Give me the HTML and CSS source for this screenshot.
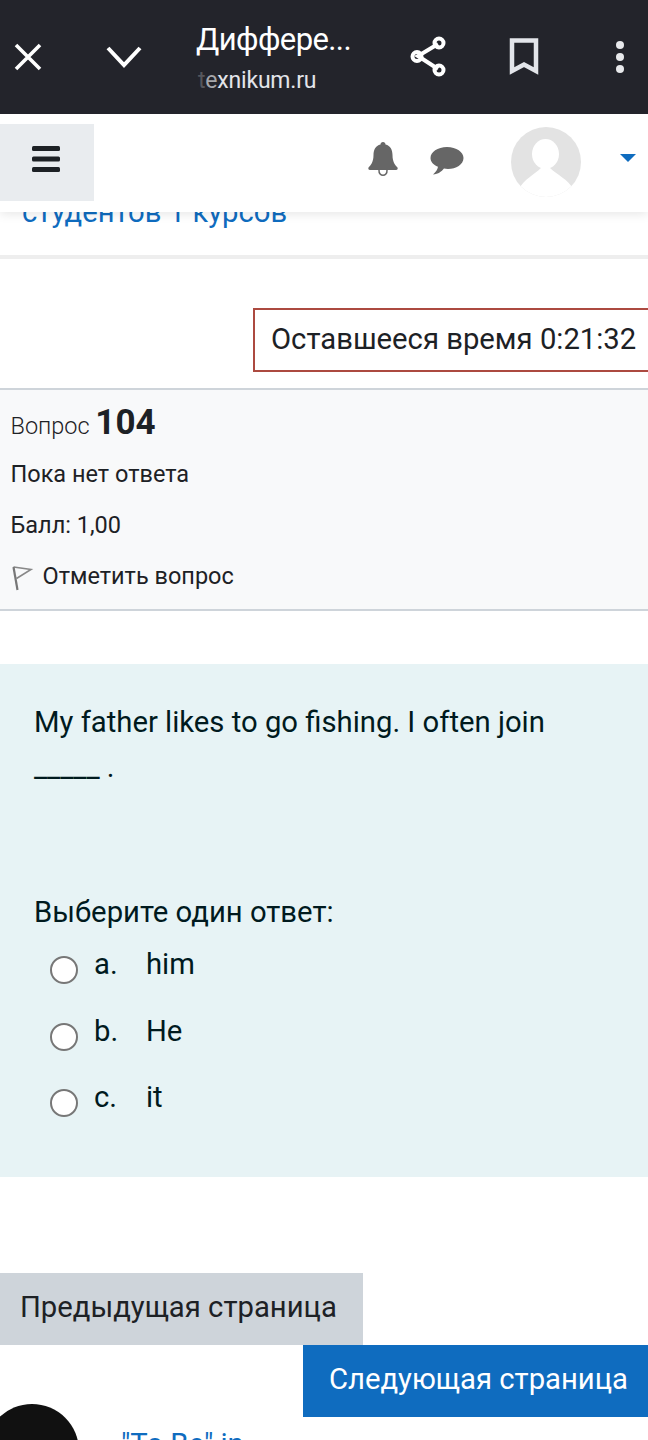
FILE: index.html
```html
<!DOCTYPE html>
<html lang="ru">
<head>
<meta charset="utf-8">
<title>Дифференцированный зачет</title>
<link rel="stylesheet" href="styles.css">
</head>
<body>
<header class="appbar">
  <svg class="ic ic-close" viewBox="0 0 28 28"><path d="M2 2 L26 26 M26 2 L2 26"/></svg>
  <svg class="ic ic-chev" viewBox="0 0 36 24"><path d="M2 3 L18 20 L34 3"/></svg>
  <div class="titles">
    <div class="title">Диффере...</div>
    <div class="url"><span class="fade1">t</span><span class="fade2">e</span>xnikum.ru</div>
  </div>
  <svg class="ic ic-share" viewBox="0 0 38 42"><path d="M29 8 L9 20 L29 33"/><circle cx="30" cy="7" r="4.5"/><circle cx="8" cy="20.500" r="4.500"/><circle cx="30" cy="34" r="4.500"/></svg>
  <svg class="ic ic-mark" viewBox="0 0 30 38"><path d="M3 2.500 H27 V33 L15 26.500 L3 33 Z"/></svg>
  <svg class="ic-dots" viewBox="0 0 10 34"><circle cx="5" cy="5" r="4"/><circle cx="5" cy="17" r="4"/><circle cx="5" cy="29" r="4"/></svg>
</header>

<nav class="sitenav">
  <div class="toggler">
    <svg viewBox="0 0 28 26" class="burger"><rect y="0" width="28" height="5" rx="1.500"/><rect y="10.500" width="28" height="5" rx="1.500"/><rect y="21" width="28" height="5" rx="1.500"/></svg>
  </div>
  <div class="navright">
    <svg class="bell" viewBox="0 0 30 34"><path d="M15 0 C16.500 0 17.500 1 17.500 2.500 C22.500 3.800 24.500 8 24.500 13 C24.500 20 27 23 29.500 25.500 C30 27 29.500 28 28 28 H2 C.5 28 0 27 .5 25.500 C3 23 5.500 20 5.500 13 C5.500 8 7.500 3.800 12.500 2.500 C12.500 1 13.500 0 15 0 Z"/><path class="bell-c" d="M11 28 C10.500 35 19.500 35 19 28"/></svg>
    <svg class="chat" viewBox="0 0 34 28"><path d="M17 0 C26.500 0 33.500 5 33.500 11 C33.500 17.500 26 22 18 22 C16.500 22 15 21.800 14 21.500 C11.500 24.500 8.500 27 3 27.500 C6 25 7.500 22.500 8 19.800 C3 17.800 .5 14.500 .5 11 C.5 5 7.500 0 17 0 Z"/></svg>
    <div class="avatar">
      <svg viewBox="0 0 70 70"><ellipse cx="34.500" cy="27" rx="13.500" ry="15" fill="#fff"/><path d="M8 62 C13 52 23 48 30 41 H39 C46 48 57 52 62 62 L62 70 H8 Z" fill="#fff"/></svg>
    </div>
    <span class="caret"></span>
  </div>
</nav>

<main>
  <h2 class="coursename">студентов 1 курсов</h2>
  <div class="rule"></div>
  <div class="timerrow"><div class="timer">Оставшееся время 0:21:32</div></div>
  <section class="info">
    <h3 class="qno">Вопрос <b>104</b></h3>
    <div class="state">Пока нет ответа</div>
    <div class="grade">Балл: 1,00</div>
    <div class="flag">
      <svg viewBox="0 0 24 26"><path d="M2.500 2 L20 4.500 L5.500 13.500" /><path class="pole" d="M2.500 2 L6.500 25"/></svg>
      <span>Отметить вопрос</span>
    </div>
  </section>
  <section class="content">
    <p class="qtext">My father likes to go fishing. I often join<br><span class="blank">_____</span> .</p>
    <div class="prompt">Выберите один ответ:</div>
    <div class="answers">
      <label class="ans"><span class="radio"></span><span class="let">a.</span><span>him</span></label>
      <label class="ans"><span class="radio"></span><span class="let">b.</span><span>He</span></label>
      <label class="ans"><span class="radio"></span><span class="let">c.</span><span>it</span></label>
    </div>
  </section>
  <div class="btn prev">Предыдущая страница</div>
  <div class="btn next">Следующая страница</div>
  <div class="footerrow">
    <div class="disc"></div>
    <a class="link">"To Be" in</a>
  </div>
</main>
</body>
</html>
```
FILE: styles.css
```css
* { box-sizing: border-box; }
html, body { margin: 0; padding: 0; }
body {
  width: 648px;
  height: 1440px;
  overflow: hidden;
  background: #fff;
  font-family: Roboto, "Liberation Sans", sans-serif;
  color: #1d2125;
}

.appbar {
  height: 114px;
  background: #23242b;
  display: flex;
  align-items: center;
  position: relative;
  z-index: 3;
}
.ic { fill: none; stroke: #fff; stroke-width: 4; flex: none; }
.ic-close { width: 28px; height: 28px; margin: 0 0 0 14px; stroke-width: 3.600; }
.ic-chev { width: 36px; height: 24px; margin: 0 0 0 64px; }
.titles { width: 200px; margin-left: 54px; align-self: flex-start; padding-top: 21px; }
.title { font-size: 31px; line-height: 38px; color: #fff; letter-spacing: -.6px; white-space: nowrap; }
.url { font-size: 23px; line-height: 28px; margin-top: 8px; color: #e3e5ea; padding-left: 2px; letter-spacing: -.2px; }
.fade1 { color: #55565c; }
.fade2 { color: #a6a7ab; }
.ic-share { width: 38px; height: 42px; margin-left: 13px; stroke-width: 4; }
.ic-mark { width: 30px; height: 38px; margin-left: 62px; stroke: #e3e5ea; stroke-width: 4.500; }
.ic-dots { width: 10px; height: 34px; margin-left: 76px; fill: #e8e9ec; }

.sitenav {
  height: 98px;
  background: #fff;
  position: relative;
  z-index: 2;
  box-shadow: 0 2px 10px rgba(0,0,0,.1);
  display: flex;
  justify-content: space-between;
  padding-top: 10px;
}
.toggler {
  width: 94px;
  height: 77px;
  background: #e9ecef;
  display: flex;
  align-items: center;
  justify-content: center;
  padding-right: 2px;
}
.burger { width: 28px; height: 26px; fill: #1d2125; display: block; margin-top: -8px; }
.navright { display: flex; align-items: flex-start; }
.bell { width: 30px; height: 34px; fill: #666; margin-top: 18px; }
.bell-c { fill: none; stroke: #666; stroke-width: 1.500; }
.chat { width: 34px; height: 28px; fill: #666; margin: 23px 0 0 32px; }
.avatar {
  width: 70px; height: 70px; margin: 3px 0 0 47px;
  border-radius: 50%; background: #e3e3e3; overflow: hidden;
}
.avatar svg { display: block; width: 70px; height: 70px; }
.caret {
  width: 0; height: 0; margin: 30px 12px 0 39px;
  border-left: 8px solid transparent;
  border-right: 8px solid transparent;
  border-top: 8px solid #0f6cbf;
}

.coursename {
  margin: -22px 0 0;
  padding-left: 22px;
  font-size: 29.250px;
  line-height: 44px;
  font-weight: 400;
  color: #0f6cbf;
  height: 65px;
}
.rule { height: 4px; background: #eeeeee; margin-top: 0; }

.timerrow { display: flex; justify-content: flex-end; margin-top: 49px; }
.timer {
  width: 395px;
  height: 64px;
  border: 2px solid #ac4a40;
  border-right: 0;
  padding-left: 16px;
  font-size: 29.250px;
  line-height: 58px;
  color: #1d2125;
}

.info {
  margin-top: 16px;
  height: 223px;
  background: #f8f9fa;
  border-top: 2px solid #ced4da;
  border-bottom: 2px solid #ced4da;
  padding: 13px 11px 0;
  font-size: 23.500px;
}
.qno { margin: 0 0 0 -.5px; font-weight: 300; font-size: 23.500px; line-height: 40px; }
.qno b { font-weight: 700; font-size: 35px; }
.state { margin: 14px 0 0 -.5px; line-height: 28px; }
.grade { margin: 23px 0 0 -.5px; line-height: 28px; }
.flag { margin: 22px 0 0 -.5px; line-height: 28px; display: flex; align-items: center; gap: 8px; }
.flag svg { width: 24px; height: 26px; fill: none; stroke: #888; stroke-width: 1.600; flex: none; margin-top: 4px; }
.flag .pole { stroke: #777; stroke-width: 2.200; }

.content {
  margin-top: 53px;
  height: 513px;
  background: #e7f3f5;
  padding: 36px 34px 0;
  color: #001a1e;
  font-size: 29.250px;
}
.qtext { margin: 0; line-height: 45px; }
.blank { letter-spacing: -.1px; }
.prompt { margin-top: 102px; line-height: 40px; }
.answers { margin: 12px 0 0 16px; }
.ans { display: flex; align-items: flex-start; height: 66.500px; line-height: 40px; }
.radio {
  width: 28px; height: 28px; border-radius: 50%;
  background: #fff; border: 2.500px solid #777; margin-top: 12px; flex: none;
}
.let { width: 52px; margin-left: 16px; flex: none; }

.btn { height: 72px; font-size: 29.250px; line-height: 69px; }
.prev { margin-top: 96px; width: 363px; background: #ced4da; padding-left: 20px; color: #1d2125; }
.next { margin-left: 303px; width: 345px; background: #0f6cbf; padding-left: 26px; color: #fff; }

.footerrow { position: relative; display: flex; margin-top: -13px; }
.disc { width: 94px; height: 94px; margin-left: -15px; border-radius: 50%; background: #111; flex: none; }
.link { margin-left: 42px; margin-top: 20px; font-size: 29.250px; line-height: 40px; color: #0f6cbf; }
```
